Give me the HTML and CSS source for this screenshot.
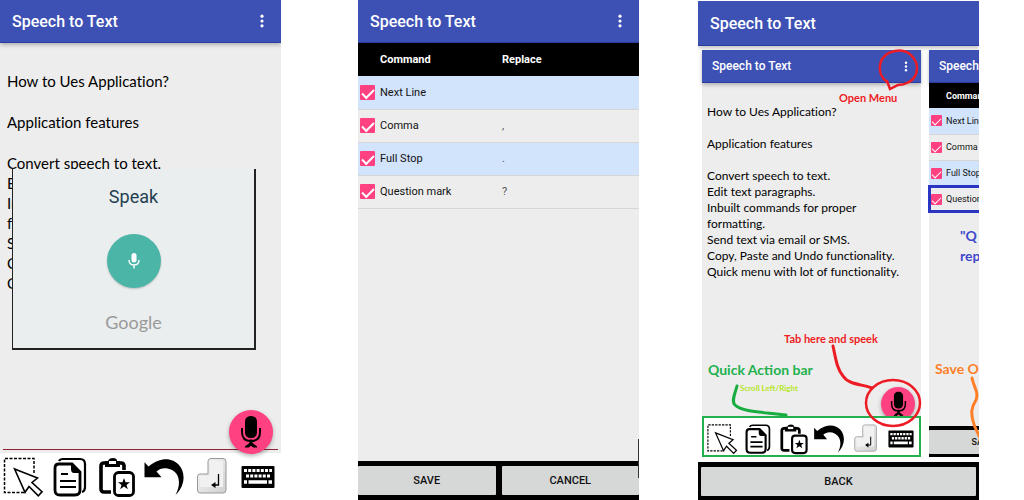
FILE: index.html
```html
<!DOCTYPE html>
<html lang="en">
<head>
  <meta charset="UTF-8">
  <title>Speech to Text</title>
  <link rel="stylesheet" href="styles.css">
</head>
<body>

  <svg class="sprite" aria-hidden="true">
    <symbol id="dots" viewBox="0 0 6 16">
      <circle cx="3" cy="2.5" r="1.8"/><circle cx="3" cy="8" r="1.8"/><circle cx="3" cy="13.5" r="1.8"/>
    </symbol>
    <symbol id="select" viewBox="0 0 42 42">
      <path d="M32 17V2.5H2.5V36.5H24" fill="none" stroke="#000" stroke-width="1.5" stroke-dasharray="3 1.5"/>
      <path d="M12.6 13L35.5 22L30 26.5L40 35.7L36.3 39.8L27 30.5L23 36.3Z" fill="#fff" stroke="#000" stroke-width="1.6"/>
    </symbol>
    <symbol id="copy" viewBox="0 0 42 42">
      <path d="M10 5Q11 3 14 3H31Q36 3 36 8V31Q36 35 33 36" fill="none" stroke="#000" stroke-width="2.2"/>
      <path d="M10 8H23L31 16V34Q31 39 26 39H11Q6 39 6 34V12Q6 8 10 8Z" fill="#fff" stroke="#000" stroke-width="2.8"/>
      <path d="M22 7L32 17H25Q22 17 22 13Z"/>
      <path d="M12 18H19M11 25H27M11 31H27" stroke="#000" stroke-width="2.2"/>
    </symbol>
    <symbol id="paste" viewBox="0 0 42 42">
      <path d="M15 36H8Q5 36 5 33V10Q5 7 8 7H25Q28 7 28 10V14" fill="none" stroke="#000" stroke-width="3.6"/>
      <path d="M9 5H12Q13 2 17 2T21 5H24V11H9Z"/>
      <rect x="13" y="5" width="7" height="3" fill="#fff"/>
      <rect x="18.5" y="16.5" width="19" height="23" rx="4" fill="#fff" stroke="#000" stroke-width="2.8"/>
      <path d="M28 22L29.5 26.2H34L30.5 28.9L31.8 33.2L28 30.6L24.2 33.2L25.5 28.9L22 26.2H26.5Z"/>
    </symbol>
    <symbol id="undo" viewBox="0 0 42 42">
      <path d="M1.5 6.3L5.5 10.5C18 0 30 2 36 9C43 17 42 30 32.5 39C38 29 37 18 29 14C23 11 17 12 13.5 15.5L18.5 21.3H1.5Z"/>
    </symbol>
    <symbol id="enter" viewBox="0 0 42 42">
      <linearGradient id="key" x1="0" y1="0" x2="1" y2="1">
        <stop offset="0" stop-color="#fafafa"/><stop offset="1" stop-color="#cfcfcf"/>
      </linearGradient>
      <path d="M21 2.5H33Q36 2.5 36 5.5V34Q36 37 33 37H10Q7.5 37 7.5 34V21Q7.5 18 10 18H18V5.5Q18 2.5 21 2.5Z" fill="url(#key)" stroke="#999"/>
      <path d="M20 5H33V31H10V20H20Z" fill="#f1f1f1"/>
      <path d="M28.5 18V29H23" fill="none" stroke="#000" stroke-width="1.3"/>
      <path d="M21 29L25.5 26V32Z"/>
    </symbol>
    <symbol id="keyboard" viewBox="0 0 42 42">
      <rect x="4.5" y="10" width="33" height="22" rx="1"/>
      <path d="M7 14.500H35M9 20H33" stroke="#fff" stroke-width="3" stroke-dasharray="3 1.200"/>
      <path d="M7 26H10M11.500 26H30M31.500 26H35" stroke="#fff" stroke-width="3.500"/>
    </symbol>
    <symbol id="mic" viewBox="0 0 22 34">
      <rect x="5" y="1" width="12" height="22" rx="5.5"/>
      <path d="M2 13V17Q2 26 11 26T20 17V13" fill="none" stroke="#000" stroke-width="2"/>
      <path d="M10 25H12V28L17 32H13L11 30L9 32H5L10 28Z" stroke="#000"/>
    </symbol>
  </svg>

  <section class="phone editor">
    <header class="appbar">
      <h1>Speech to Text</h1>
      <button class="menu" aria-label="Menu"><svg><use href="#dots"/></svg></button>
    </header>
    <div class="notes">
      <p>How to Ues Application?</p>
      <p>Application features</p>
      <p>Convert speech to text.<br>Edit text paragraphs.<br>Inbuilt commands for proper<br>formatting.<br>Send text via email or SMS.<br>Copy, Paste and Undo functionality.<br>Quick menu with lot of functionality.</p>
    </div>
    <div class="dialog">
      <h2>Speak</h2>
      <button class="listen" aria-label="Listen">
        <svg viewBox="0 0 12 18"><rect x="3.5" y="1" width="5" height="9.5" rx="2.5" fill="#fff"/><path d="M1 8Q1 13 6 13T11 8M6 13V16.5" fill="none" stroke="#fff" stroke-width="1.4"/></svg>
      </button>
      <span class="brand">Google</span>
    </div>
    <button class="fab" aria-label="Speak"><svg><use href="#mic"/></svg></button>
    <nav class="tools">
      <button aria-label="Select"><svg><use href="#select"/></svg></button>
      <button aria-label="Copy"><svg><use href="#copy"/></svg></button>
      <button aria-label="Paste"><svg><use href="#paste"/></svg></button>
      <button aria-label="Undo"><svg><use href="#undo"/></svg></button>
      <button aria-label="Enter"><svg><use href="#enter"/></svg></button>
      <button aria-label="Keyboard"><svg><use href="#keyboard"/></svg></button>
    </nav>
  </section>

  <section class="phone commands">
    <header class="appbar">
      <h1>Speech to Text</h1>
      <button class="menu" aria-label="Menu"><svg><use href="#dots"/></svg></button>
    </header>
    <table>
      <thead>
        <tr><th class="check"></th><th class="name">Command</th><th>Replace</th></tr>
      </thead>
      <tbody>
        <tr><td><input type="checkbox" id="next" checked></td><td><label for="next">Next Line</label></td><td></td></tr>
        <tr><td><input type="checkbox" id="comma" checked></td><td><label for="comma">Comma</label></td><td>,</td></tr>
        <tr><td><input type="checkbox" id="stop" checked></td><td><label for="stop">Full Stop</label></td><td>.</td></tr>
        <tr><td><input type="checkbox" id="question" checked></td><td><label for="question">Question mark</label></td><td>?</td></tr>
      </tbody>
    </table>
    <footer class="actions">
      <button>SAVE</button>
      <button>CANCEL</button>
    </footer>
  </section>

  <section class="phone help">
    <header class="appbar">
      <h1>Speech to Text</h1>
    </header>
    <div class="screens">
      <div class="screen">
        <header class="appbar">
          <h2>Speech to Text</h2>
          <button class="menu" aria-label="Menu"><svg><use href="#dots"/></svg></button>
        </header>
        <div class="notes">
          <p>How to Ues Application?</p>
          <p>Application features</p>
          <p>Convert speech to text.<br>Edit text paragraphs.<br>Inbuilt commands for proper<br>formatting.<br>Send text via email or SMS.<br>Copy, Paste and Undo functionality.<br>Quick menu with lot of functionality.</p>
        </div>
        <button class="fab" aria-label="Speak"><svg><use href="#mic"/></svg></button>
        <nav class="tools">
          <button aria-label="Select"><svg><use href="#select"/></svg></button>
          <button aria-label="Copy"><svg><use href="#copy"/></svg></button>
          <button aria-label="Paste"><svg><use href="#paste"/></svg></button>
          <button aria-label="Undo"><svg><use href="#undo"/></svg></button>
          <button aria-label="Enter"><svg><use href="#enter"/></svg></button>
          <button aria-label="Keyboard"><svg><use href="#keyboard"/></svg></button>
        </nav>
      </div>
      <div class="screen">
        <header class="appbar">
          <h2>Speech to Text</h2>
        </header>
        <table>
          <thead>
            <tr><th class="check"></th><th>Command</th></tr>
          </thead>
          <tbody>
            <tr><td><input type="checkbox" id="next2" checked></td><td><label for="next2">Next Line</label></td></tr>
            <tr><td><input type="checkbox" id="comma2" checked></td><td><label for="comma2">Comma</label></td></tr>
            <tr><td><input type="checkbox" id="stop2" checked></td><td><label for="stop2">Full Stop</label></td></tr>
            <tr class="marked"><td><input type="checkbox" id="question2" checked></td><td><label for="question2">Question mark</label></td></tr>
          </tbody>
        </table>
        <footer class="actions">
          <button>SAVE</button>
        </footer>
      </div>
    </div>
    <footer class="actions">
      <button>BACK</button>
    </footer>
    <svg class="marks" viewBox="0 0 281 500" fill="none" stroke-width="2.5" stroke-linecap="round">
      <path d="M189 82C177 73 180 54 197 51C213 48 222 63 218 74C215 82 206 85 200 85L192 89L189 81" stroke="#ed1c24"/>
      <path d="M135 346C138 360 139 369 145 376C151 385 164 384 174 388" stroke="#ed1c24" stroke-width="3"/>
      <ellipse cx="195" cy="403" rx="27" ry="23" stroke="#ed1c24"/>
      <path d="M39 386C37 394 33 401 37 405C44 412 65 412 88 415" stroke="#17ad40" stroke-width="3"/>
      <path d="M274 378C276 388 281 392 278 400C273 408 273 413 275 421C277 430 281 434 283 440" stroke="#ff7f27" stroke-width="3"/>
    </svg>
    <span class="tip open">Open Menu</span>
    <span class="tip speak">Tab here and speek</span>
    <span class="tip quick">Quick Action bar</span>
    <span class="tip scroll">Scroll Left/Right</span>
    <span class="tip replace">"Q<br>rep</span>
    <span class="tip save">Save O</span>
  </section>

</body>
</html>
```
FILE: styles.css
```css
* {
  box-sizing: border-box;
}

body {
  margin: 0;
  padding-right: 45px;
  min-height: 100vh;
  display: flex;
  background: #fff;
  color: #111;
  font-family: Roboto, sans-serif;
}

h1, h2, p {
  margin: 0;
}

button {
  border: none;
  padding: 0;
  font-family: inherit;
  cursor: pointer;
}

.sprite {
  position: absolute;
  width: 0;
  height: 0;
}

.phone {
  position: relative;
  flex: 1 1 0;
  min-width: 0;
  display: flex;
  flex-direction: column;
  overflow: hidden;
  background: #ededed;
}

.commands { margin-left: 77px; }
.help { margin-left: 59px; background: #fff; }

.appbar {
  height: 43px;
  flex: none;
  display: flex;
  align-items: center;
  justify-content: space-between;
  padding: 0 16px 0 12px;
  background: #3d51b4;
  border-bottom: 1px solid #2c3c9e;
  box-shadow: 0 2px 4px rgba(0,0,0,0.25);
  color: #fff;
}

.appbar h1 {
  font-size: 16px;
  font-weight: 500;
}

.menu {
  display: flex;
  background: none;
}

.menu svg {
  width: 6px;
  height: 14px;
  fill: #fff;
}

/* editor */

.notes {
  flex: 1;
  padding: 28px 6px;
  color: #000;
  font-family: Lato, sans-serif;
  font-size: 15px;
  line-height: 20px;
  font-variant-ligatures: none;
}

.notes p {
  margin-bottom: 21px;
  white-space: nowrap;
}

.editor .notes {
  border-bottom: 1px solid #8b2330;
  margin: 0 3px 3px;
  padding-left: 4px;
}

.dialog {
  position: absolute;
  top: 169px;
  left: 12px;
  right: 25px;
  height: 181px;
  display: flex;
  flex-direction: column;
  align-items: center;
  justify-content: space-between;
  padding: 16px 0;
  background: #ebeeef;
  border: 2px solid #222;
  border-top: none;
  border-left-width: 1px;
}

.dialog h2 {
  font-size: 18px;
  line-height: 24px;
  font-weight: 400;
  color: #23404f;
}

.listen {
  width: 54px;
  height: 54px;
  display: flex;
  align-items: center;
  justify-content: center;
  border-radius: 50%;
  background: #4bb5a8;
  box-shadow: 0 1px 2px rgba(0,0,0,0.2);
}

.listen svg {
  width: 12px;
  height: 18px;
}

.brand {
  font-family: Lato, sans-serif;
  font-size: 18px;
  line-height: 20px;
  color: #999;
}

.fab {
  position: absolute;
  right: 8px;
  bottom: 46px;
  width: 44px;
  height: 44px;
  display: flex;
  align-items: center;
  justify-content: center;
  border-radius: 50%;
  background: #ff4081;
  box-shadow: 0 2px 4px rgba(0,0,0,0.3);
}

.fab svg {
  width: 22px;
  height: 34px;
}

.tools {
  display: grid;
  grid-template-columns: repeat(6, 1fr);
  height: 47px;
  background: #fff;
}

.tools button {
  display: flex;
  align-items: center;
  justify-content: center;
  background: none;
}

.tools svg {
  width: 42px;
  height: 42px;
}

/* command list */

table {
  width: 100%;
  table-layout: fixed;
  border-collapse: collapse;
  font-size: 11px;
}

th, td {
  height: 33px;
  padding: 0;
  text-align: left;
  white-space: nowrap;
}

th {
  background: #000;
  color: #fff;
  font-weight: 700;
}

.check { width: 22px; }
.name { width: 122px; }

td {
  border-bottom: 1px solid #d6d6d6;
}

tbody tr:nth-child(odd) {
  background: #d2e3fc;
}

td:last-child {
  color: #555;
}

label {
  color: #111;
}

input[type="checkbox"] {
  appearance: none;
  display: flex;
  justify-content: center;
  width: 15px;
  height: 15px;
  margin: 0 0 0 2px;
  border-radius: 1px;
  background: #ff4081;
}

input[type="checkbox"]:checked::before {
  content: "";
  width: 10px;
  height: 5px;
  margin-top: 4px;
  border: solid #fff;
  border-width: 0 0 2px 2px;
  transform: rotate(-45deg);
}

.actions {
  display: flex;
  gap: 6px;
  margin-top: auto;
  padding: 5px 0;
  background: #000;
}

.actions button {
  flex: 1;
  height: 29px;
  border-radius: 1px;
  background: #d6d7d7;
  color: #111;
  font-size: 11px;
  font-weight: 500;
}

.commands::after {
  content: "";
  position: absolute;
  right: 0;
  bottom: 22px;
  width: 1px;
  height: 39px;
  background: #333;
}

/* help */

.help > .appbar {
  height: 46px;
  border-top: 1px solid #fff;
}

.help > .actions {
  padding: 5px 3px 4px;
}

.screens {
  flex: 1;
  display: flex;
  gap: 8px;
  margin-bottom: 5px;
  padding: 4px 0 0 4px;
  overflow: hidden;
}

.screen {
  position: relative;
  flex: 0 0 219px;
  display: flex;
  flex-direction: column;
  background: #ededed;
}

.screen .appbar {
  height: 33px;
  padding: 0 12px 0 10px;
}

.screen h2 {
  font-size: 12px;
  font-weight: 500;
}

.screen .menu svg {
  height: 11px;
}

.screen .notes {
  padding: 21px 5px;
  font-size: 12px;
  line-height: 16px;
}

.screen .notes p {
  margin-bottom: 16px;
}

.screen .fab {
  right: 6px;
  bottom: 36px;
  width: 34px;
  height: 34px;
}

.screen .fab svg {
  width: 17px;
  height: 26px;
}

.screen .tools {
  position: relative;
  height: 41px;
  padding-top: 4px;
  border: 2px solid #22b14c;
}

.screen .tools svg {
  width: 32px;
  height: 32px;
}

.screen table {
  font-size: 9px;
}

.screen th {
  height: 25px;
}

.screen td {
  height: 26px;
}

.screen .check {
  width: 17px;
}

.screen input[type="checkbox"] {
  width: 11px;
  height: 11px;
}

.screen input[type="checkbox"]:checked::before {
  width: 8px;
  height: 4px;
  margin-top: 3px;
  border-width: 0 0 1px 1px;
}

.marked {
  outline: 3px solid #2a35c4;
  outline-offset: -2px;
}

.screen .actions {
  padding: 4px 0 3px;
}

.screen .actions button {
  flex: 0 0 107px;
  height: 24px;
  font-size: 9px;
}

.marks {
  position: absolute;
  top: 0;
  left: 0;
  width: 281px;
  height: 500px;
  pointer-events: none;
}

.tip {
  position: absolute;
  font-family: Lato, sans-serif;
  font-weight: 700;
  line-height: 20px;
  white-space: nowrap;
}

.open { top: 88px; left: 141px; font-size: 11px; color: #ed1c24; }
.speak { top: 329px; left: 86px; font-size: 11px; color: #ed1c24; }
.quick { top: 360px; left: 10px; font-size: 14px; color: #22b14c; }
.scroll { top: 378px; left: 42px; font-size: 8px; color: #b5e61d; }
.replace { top: 226px; left: 262px; font-size: 14px; color: #3f48cc; }
.save { top: 359px; left: 237px; font-size: 14px; color: #ff7f27; }
```
